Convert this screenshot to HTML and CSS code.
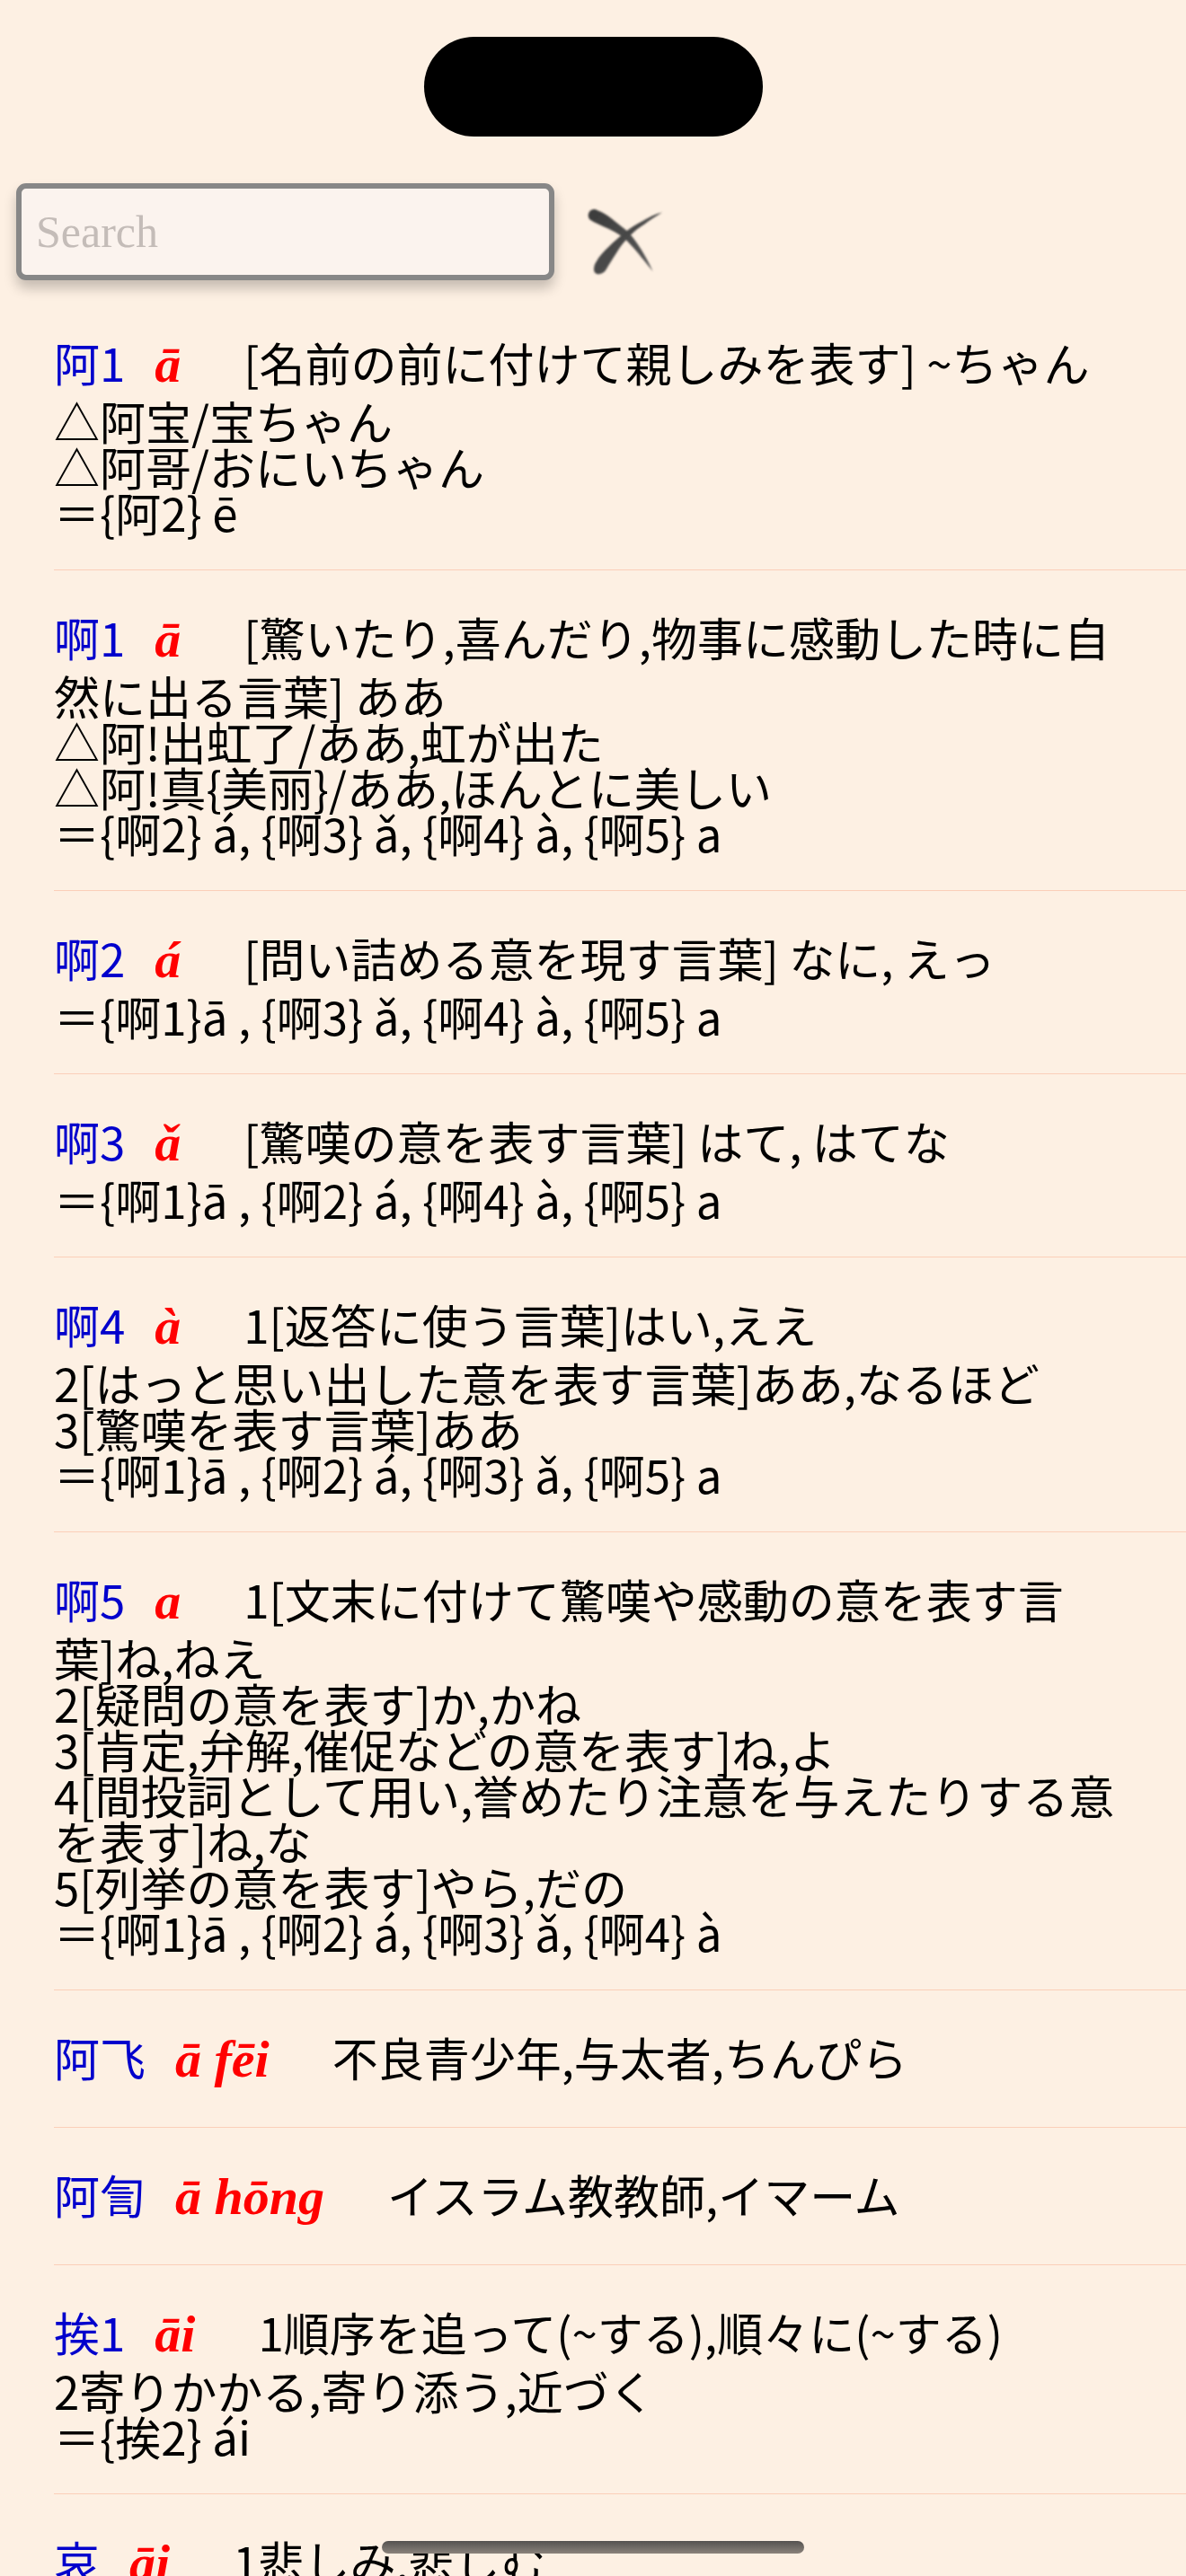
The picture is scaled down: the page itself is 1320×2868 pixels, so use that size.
FILE: index.html
```html
<!DOCTYPE html>
<html lang="ja">
<head>
<meta charset="utf-8">
<title>辞書</title>
<link rel="stylesheet" href="styles.css">
</head>
<body>
<header class="top">
  <div class="island"></div>
  <div class="search-row">
    <input class="search" type="text" placeholder="Search">
    <svg class="clear" width="90" height="80" viewBox="0 0 90 80" aria-label="clear">
      <defs>
        <linearGradient id="g" x1="0" y1="0" x2="1" y2="1">
          <stop offset="0" stop-color="#3a3a3a"/>
          <stop offset="1" stop-color="#5a5a5a"/>
        </linearGradient>
        <filter id="b" x="-10%" y="-10%" width="120%" height="120%"><feGaussianBlur stdDeviation="0.8"/></filter>
      </defs>
      <g filter="url(#b)" fill="url(#g)">
        <path d="M13 3.3 C22 7 28 11 33.2 15.5 C40 21 46 25 50.1 29.4 C56 36 60 42 64.1 48.6 C69 57 73 64 76.5 72 C72 66 65 58 59.9 51.4 C54 45 49 39 43.9 34.6 C38 30 32 27 26.8 24.5 C19 21 12 18 6.9 14.7 C2 11 6 1 13 3.3 Z"/>
        <path d="M87 6.5 C80 11 73 15 67.1 19.7 C60 24 54 29 49.3 34.6 C44 40 40 45 36.2 51.5 C32 58 28 64 24.7 70.1 C21 77 11 77 11 70 C11 66 12 64 13.3 61.9 C17 55 22 50 27.8 44.5 C33 39 39 34 44.7 29.4 C51 24 58 20 64.9 16.3 C72 12 80 8 87 6.5 Z"/>
      </g>
    </svg>
  </div>
</header>

<main class="list">
  <section class="entry">
    <div class="l1"><span class="hw">阿1</span><span class="py">ā</span>[名前の前に付けて親しみを表す] ~ちゃん</div>
    <div class="ln">△阿宝/宝ちゃん</div>
    <div class="ln">△阿哥/おにいちゃん</div>
    <div class="ln">＝{阿2} ē</div>
  </section>
  <section class="entry">
    <div class="l1"><span class="hw">啊1</span><span class="py">ā</span>[驚いたり,喜んだり,物事に感動した時に自</div>
    <div class="ln">然に出る言葉] ああ</div>
    <div class="ln">△阿!出虹了/ああ,虹が出た</div>
    <div class="ln">△阿!真{美丽}/ああ,ほんとに美しい</div>
    <div class="ln">＝{啊2} á, {啊3} ǎ, {啊4} à, {啊5} a</div>
  </section>
  <section class="entry">
    <div class="l1"><span class="hw">啊2</span><span class="py">á</span>[問い詰める意を現す言葉] なに, えっ</div>
    <div class="ln">＝{啊1}ā , {啊3} ǎ, {啊4} à, {啊5} a</div>
  </section>
  <section class="entry">
    <div class="l1"><span class="hw">啊3</span><span class="py">ǎ</span>[驚嘆の意を表す言葉] はて, はてな</div>
    <div class="ln">＝{啊1}ā , {啊2} á, {啊4} à, {啊5} a</div>
  </section>
  <section class="entry">
    <div class="l1"><span class="hw">啊4</span><span class="py">à</span>1[返答に使う言葉]はい,ええ</div>
    <div class="ln">2[はっと思い出した意を表す言葉]ああ,なるほど</div>
    <div class="ln">3[驚嘆を表す言葉]ああ</div>
    <div class="ln">＝{啊1}ā , {啊2} á, {啊3} ǎ, {啊5} a</div>
  </section>
  <section class="entry">
    <div class="l1"><span class="hw">啊5</span><span class="py">a</span>1[文末に付けて驚嘆や感動の意を表す言</div>
    <div class="ln">葉]ね,ねえ</div>
    <div class="ln">2[疑問の意を表す]か,かね</div>
    <div class="ln">3[肯定,弁解,催促などの意を表す]ね,よ</div>
    <div class="ln">4[間投詞として用い,誉めたり注意を与えたりする意</div>
    <div class="ln">を表す]ね,な</div>
    <div class="ln">5[列挙の意を表す]やら,だの</div>
    <div class="ln">＝{啊1}ā , {啊2} á, {啊3} ǎ, {啊4} à</div>
  </section>
  <section class="entry">
    <div class="l1"><span class="hw">阿飞</span><span class="py">ā fēi</span>不良青少年,与太者,ちんぴら</div>
  </section>
  <section class="entry">
    <div class="l1"><span class="hw">阿訇</span><span class="py">ā hōng</span>イスラム教教師,イマーム</div>
  </section>
  <section class="entry">
    <div class="l1"><span class="hw">挨1</span><span class="py">āi</span>1順序を追って(~する),順々に(~する)</div>
    <div class="ln">2寄りかかる,寄り添う,近づく</div>
    <div class="ln">＝{挨2} ái</div>
  </section>
  <section class="entry">
    <div class="l1"><span class="hw">哀</span><span class="py">āi</span>1悲しみ,悲しむ</div>
  </section>
</main>

<div class="home-bar"></div>
</body>
</html>
```

FILE: styles.css
```css
html, body {
  margin: 0;
  padding: 0;
}

body {
  background: #fdf0e3;
  color: #000;
  font-family: "Noto Sans CJK JP", "Noto Sans CJK SC", sans-serif;
  font-size: 51px;
  overflow: hidden;
}

.top {
  padding-top: 41px;
}

.island {
  width: 377px;
  height: 111px;
  margin: 0 auto;
  background: #000;
  border-radius: 56px;
}

.search-row {
  display: flex;
  align-items: flex-start;
  margin-top: 52px;
  padding-left: 18px;
}

.search {
  box-sizing: border-box;
  width: 599px;
  height: 108px;
  margin: 0;
  padding: 0 0 0 16px;
  border: 6px solid #878787;
  border-radius: 11px;
  background: #fbf3ee;
  box-shadow: 0 9px 14px rgba(0, 0, 0, 0.22);
  font-family: "Liberation Serif", serif;
  font-size: 50px;
  color: #333;
  outline: none;
}

.search::placeholder {
  color: #c4bcb8;
}

.clear {
  display: block;
  margin-left: 33px;
  margin-top: 26px;
}

.list {
  margin-top: 17px;
  margin-left: 60px;
}

.entry {
  padding-top: 35px;
  padding-bottom: 38px;
  border-bottom: 1px solid #fbcfb9;
  white-space: nowrap;
}

.l1 {
  height: 79px;
  line-height: 79px;
}

.ln {
  line-height: 51px;
}

.hw {
  color: #0000cc;
  margin-right: 33px;
}

.py {
  color: #ff0000;
  font-family: "Liberation Serif", "Times New Roman", serif;
  font-style: italic;
  font-weight: bold;
  font-size: 58px;
  line-height: 1;
  margin-right: 70px;
}

.home-bar {
  position: fixed;
  left: 50%;
  bottom: 25px;
  width: 470px;
  height: 14px;
  margin-left: -235px;
  border-radius: 7px;
  background: linear-gradient(#555250, #8a827b);
}
```
